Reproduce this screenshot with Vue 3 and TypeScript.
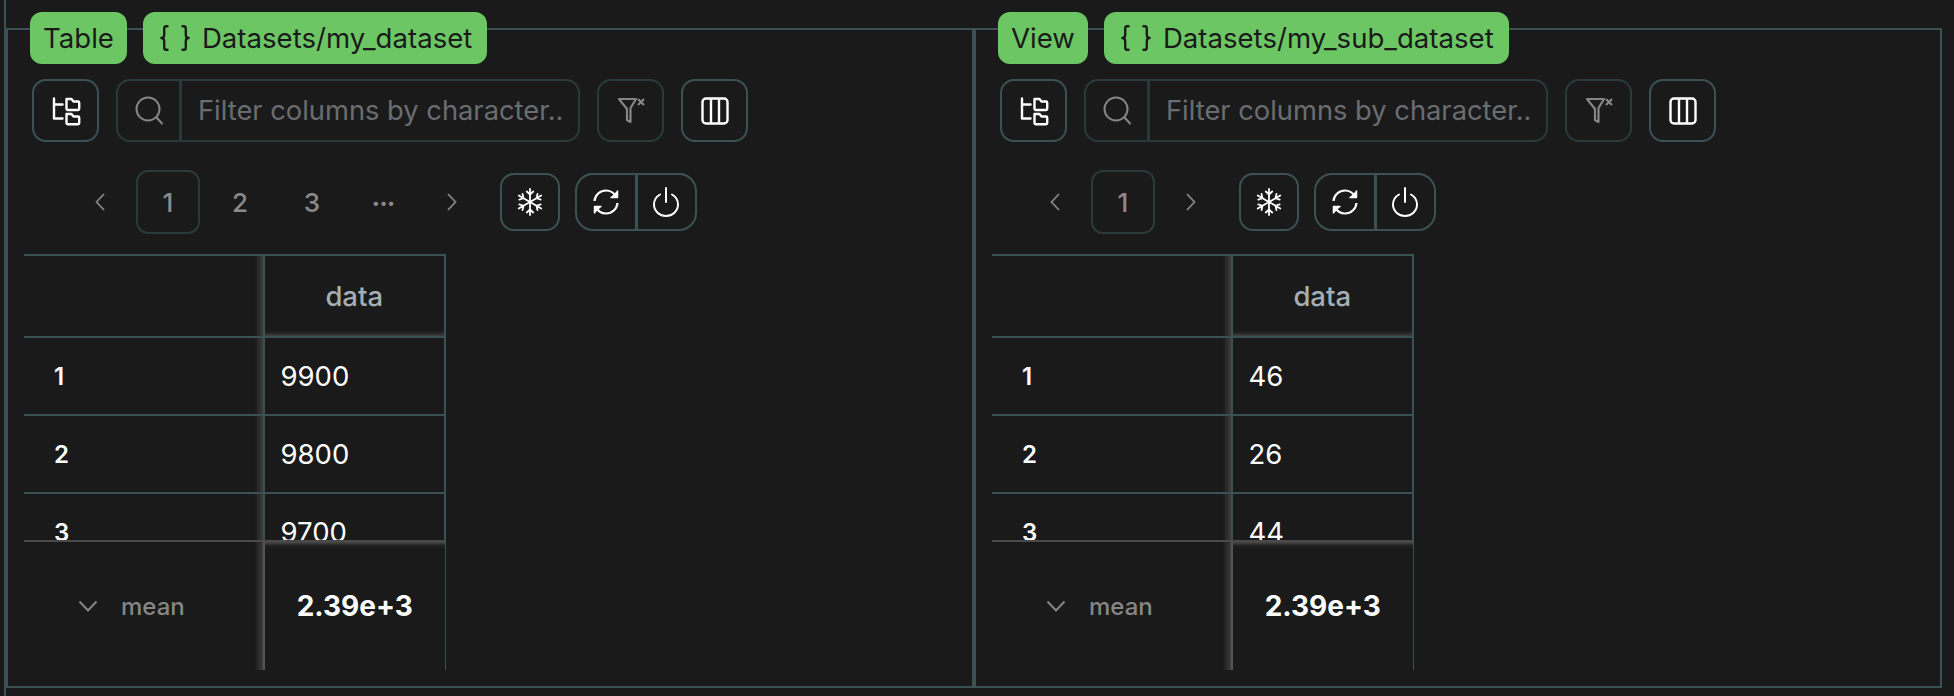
<script setup lang="ts">
interface Panel {
  kind: string;
  path: string;
  pages: string[];
  single: boolean;
  rows: string[];
  mean: string;
}

const panels: Panel[] = [
  { kind: 'Table', path: 'Datasets/my_dataset', pages: ['1', '2', '3', '•••'], single: false, rows: ['9900', '9800', '9700'], mean: '2.39e+3' },
  { kind: 'View', path: 'Datasets/my_sub_dataset', pages: ['1'], single: true, rows: ['46', '26', '44'], mean: '2.39e+3' }
];
</script>

<template>
  <div class="page">
    <div class="panels">
      <section v-for="panel in panels" :key="panel.path" class="panel">
        <div class="tags">
          <span class="tag tag-kind">{{ panel.kind }}</span>
          <span class="tag">
            <svg class="braces" viewBox="0 0 32 28" fill="none" stroke="#1a1a1a" stroke-width="2.5" stroke-linecap="round" stroke-linejoin="round">
              <path d="M8 1.5H6.5C5 1.5 4.5 2.5 4.5 4V10.5C4.5 12.5 3.5 14 1.5 14C3.5 14 4.5 15.5 4.5 17.5V24C4.5 25.5 5 26.5 6.5 26.5H8" />
              <path d="M24 1.5H25.500C27 1.500 27.500 2.500 27.500 4V10.500C27.500 12.500 28.500 14 30.500 14C28.500 14 27.500 15.500 27.500 17.500V24C27.500 25.500 27 26.500 25.500 26.500H24" />
            </svg>
            {{ panel.path }}
          </span>
        </div>

        <div class="toolbar">
          <button class="btn">
            <svg width="30" height="30" viewBox="0 0 30 30" fill="none" stroke="#fff" stroke-width="2.400" stroke-linejoin="round" stroke-linecap="round">
              <path d="M3 2.500V22.500H11.500M3 8.500H11.500" />
              <path d="M15.500 3H20.500L22.500 5.500H27C27.800 5.500 28.200 6 28.200 6.700V12.800C28.200 13.500 27.800 14 27 14H16.700C16 14 15.500 13.500 15.500 12.800Z" />
              <path d="M15.500 18H20.500L22.500 20.500H27C27.800 20.500 28.200 21 28.200 21.700V27C28.200 27.800 27.800 28.200 27 28.200H16.700C16 28.200 15.500 27.800 15.500 27Z" />
            </svg>
          </button>
          <div class="search">
            <span class="search-icon">
              <svg width="32" height="32" viewBox="0 0 32 32" fill="none" stroke="#868686" stroke-width="2" stroke-linecap="round">
                <circle cx="15" cy="14" r="11.500" />
                <path d="M23.500 22.500L29 28.500" />
              </svg>
            </span>
            <input class="search-input" placeholder="Filter columns by character.." />
          </div>
          <button class="btn btn-muted">
            <svg width="30" height="30" viewBox="0 0 30 30" fill="none" stroke="#868686" stroke-width="2.200" stroke-linejoin="round">
              <path d="M3 3H20L14.500 12V26L11 24V13Z" />
              <path d="M22 3L28 9M28 3L22 9" />
            </svg>
          </button>
          <button class="btn">
            <svg width="30" height="30" viewBox="0 0 30 30" fill="none" stroke="#fff" stroke-width="2.400">
              <rect x="2.500" y="2.500" width="25" height="25" rx="3.500" />
              <path d="M11 2.500V27.500M19 2.500V27.500" />
            </svg>
          </button>
        </div>

        <div class="controls" :class="{ 'controls-single': panel.single }">
          <nav class="pager">
            <span class="page-item page-arrow">
              <svg width="12" height="20" viewBox="0 0 12 20" fill="none" stroke="#868686" stroke-width="1.800"><path d="M10 2L2.500 10L10 18" /></svg>
            </span>
            <span
              v-for="(p, i) in panel.pages"
              :key="p"
              class="page-item"
              :class="{ 'page-current': i === 0, 'page-dots': p === '•••' }"
            >{{ p }}</span>
            <span class="page-item page-arrow">
              <svg width="12" height="20" viewBox="0 0 12 20" fill="none" stroke="#868686" stroke-width="1.800"><path d="M2 2L9.500 10L2 18" /></svg>
            </span>
          </nav>
          <button class="btn btn-small">
            <svg width="30" height="30" viewBox="0 0 30 30" fill="none" stroke="#fff" stroke-width="1.800" stroke-linecap="round" stroke-linejoin="round">
              <g v-for="deg in [0, 60, 120]" :key="deg" :transform="`rotate(${deg} 15 15)`">
                <path d="M15 2V28M11.800 4.500L15 7.500L18.200 4.500M11.800 25.500L15 22.500L18.200 25.500" />
              </g>
            </svg>
          </button>
          <div class="btn-group">
            <button class="group-btn">
              <svg width="30" height="30" viewBox="0 0 30 30" fill="none" stroke="#fff" stroke-width="2.200" stroke-linejoin="round">
                <path d="M3.500 14C4 8 9 3.500 15 3.500C19.500 3.500 23 6 25 9.500" />
                <path d="M26.500 16C26 22 21 26.500 15 26.500C10.500 26.500 7 24 5 20.500" />
                <path d="M26.500 3.500V10.500H19.500" fill="#fff" stroke-width="1.500" />
                <path d="M3.500 26.500V19.500H10.500" fill="#fff" stroke-width="1.500" />
              </svg>
            </button>
            <button class="group-btn">
              <svg width="30" height="32" viewBox="0 0 30 32" fill="none" stroke="#fff" stroke-width="2" stroke-linecap="round">
                <path d="M15 2V16" />
                <path d="M9 8.500C5.500 10.500 3 14 3 18.500C3 25 8.500 30 15 30C21.500 30 27 25 27 18.500C27 14 24.500 10.500 21 8.500" />
              </svg>
            </button>
          </div>
        </div>

        <div class="table">
          <div class="table-scroll">
            <div class="cell cell-frozen cell-head"></div>
            <div class="cell cell-data cell-head cell-title">data</div>
            <template v-for="(value, i) in panel.rows" :key="i">
              <div class="cell cell-frozen cell-index">{{ i + 1 }}</div>
              <div class="cell cell-data cell-value">{{ value }}</div>
            </template>
          </div>
          <div class="table-foot">
            <div class="foot-label">
              <svg width="20" height="12" viewBox="0 0 20 12" fill="none" stroke="#868686" stroke-width="2"><path d="M1.500 1.500L10 10.500L18.500 1.500" /></svg>
              <span>mean</span>
            </div>
            <div class="foot-value">{{ panel.mean }}</div>
          </div>
        </div>
      </section>
    </div>
  </div>
</template>

<style>
html,
body {
  background: #1a1a1a;
}
</style>

<style scoped>
.page {
  box-sizing: border-box;
  height: 696px;
  padding-left: 4px;
  padding-right: 12px;
  font-family: Inter, "Liberation Sans", sans-serif;
  color: #fff;
  overflow: hidden;
}

.panels {
  box-sizing: border-box;
  height: 100%;
  display: flex;
  padding-top: 28px;
  padding-bottom: 8px;
  border-left: 2px solid #3c5154;
}

.panel {
  box-sizing: border-box;
  flex: 1;
  min-width: 0;
  border: 2px solid #3c5154;
}

.tags {
  display: flex;
  gap: 16px;
  margin: -18px 0 0 22px;
}

.tag {
  display: flex;
  align-items: center;
  gap: 12px;
  height: 52px;
  padding: 0 15px;
  border-radius: 12px;
  background: #6cc664;
  color: #1a1a1a;
  font-size: 27.6px;
  line-height: 52px;
}

.tag-kind {
  padding: 0 13px;
}

.braces {
  width: 30px;
  height: 28px;
  margin-left: 2px;
}

.toolbar {
  display: flex;
  gap: 17px;
  margin: 15px 0 0 24px;
}

.btn {
  box-sizing: border-box;
  width: 67px;
  height: 63px;
  display: flex;
  align-items: center;
  justify-content: center;
  padding: 0;
  background: none;
  border: 2px solid #3c5154;
  border-radius: 14px;
}

.btn-muted {
  border-color: #2a3a3c;
}

.btn-small {
  width: 60px;
  height: 58px;
  margin-left: 20px;
}

.search {
  box-sizing: border-box;
  width: 464px;
  height: 63px;
  display: flex;
  border: 2px solid #2a3a3c;
  border-radius: 14px;
}

.search-icon {
  width: 61px;
  display: flex;
  align-items: center;
  justify-content: center;
  border-right: 3px solid #2a3a3c;
}

.search-input {
  flex: 1;
  min-width: 0;
  padding: 0 8px 0 16px;
  border: 0;
  outline: 0;
  background: none;
  color: #fff;
  font-family: inherit;
  font-size: 27.3px;
}

.search-input::placeholder {
  color: #6a6d70;
  opacity: 1;
}

.controls {
  display: flex;
  align-items: center;
  height: 64px;
  margin: 28px 0 0 64px;
}

.controls-single {
  margin-left: 51px;
}

.pager {
  display: flex;
  gap: 8px;
}

.page-item {
  box-sizing: border-box;
  width: 64px;
  height: 64px;
  display: flex;
  align-items: center;
  justify-content: center;
  color: #8a8a8a;
  font-size: 26px;
  font-weight: 500;
  border-radius: 12px;
}

.page-arrow {
  width: 56px;
}

.page-current {
  border: 2px solid #2a3a3c;
}

.page-dots {
  font-size: 14px;
  font-weight: 700;
  letter-spacing: 1px;
}

.btn-group {
  box-sizing: border-box;
  display: flex;
  width: 122px;
  height: 58px;
  margin-left: 15px;
  border: 2px solid #3c5154;
  border-radius: 18px;
}

.group-btn {
  flex: 1;
  display: flex;
  align-items: center;
  justify-content: center;
  padding: 0;
  background: none;
  border: 0;
}

.group-btn + .group-btn {
  border-left: 3px solid #3c5154;
}

.table {
  width: 422px;
  margin: 20px 0 0 16px;
}

.table-scroll {
  display: grid;
  grid-template-columns: 238.500px 183.500px;
  grid-template-rows: 84px repeat(3, 78px);
  height: 288px;
  overflow: hidden;
}

.cell {
  box-sizing: border-box;
  display: flex;
  align-items: center;
  border-bottom: 2px solid #3c5154;
}

.cell-frozen {
  background: linear-gradient(to right, transparent calc(100% - 8px), #3e3e3e);
}

.cell-data {
  border-left: 2px solid #3c5154;
  border-right: 2px solid #3c5154;
}

.cell-head {
  border-top: 2px solid #3c5154;
}

.cell-title {
  justify-content: center;
  color: #a4aeb4;
  font-size: 27.5px;
  font-weight: 500;
  box-shadow: inset 0 -5px 5px -4px #555;
}

.cell-index {
  padding-left: 30px;
  font-size: 24px;
  font-weight: 600;
}

.cell-value {
  padding-left: 16px;
  font-size: 27.5px;
}

.table-foot {
  display: grid;
  grid-template-columns: 238.500px 183.500px;
  height: 128px;
  border-top: 2px solid #4a4a4a;
  margin-top: -2px;
  position: relative;
  background: #1a1a1a;
}

.foot-label {
  display: flex;
  align-items: center;
  gap: 23px;
  padding-left: 54px;
  color: #868686;
  font-size: 24px;
  font-weight: 500;
  background: linear-gradient(to right, transparent calc(100% - 8px), #3e3e3e);
}

.foot-value {
  display: flex;
  align-items: center;
  justify-content: center;
  font-size: 28px;
  font-weight: 700;
  border-left: 2px solid #555;
  border-right: 1px solid #3c5154;
  box-shadow: inset 0 6px 5px -5px #666;
}
</style>
